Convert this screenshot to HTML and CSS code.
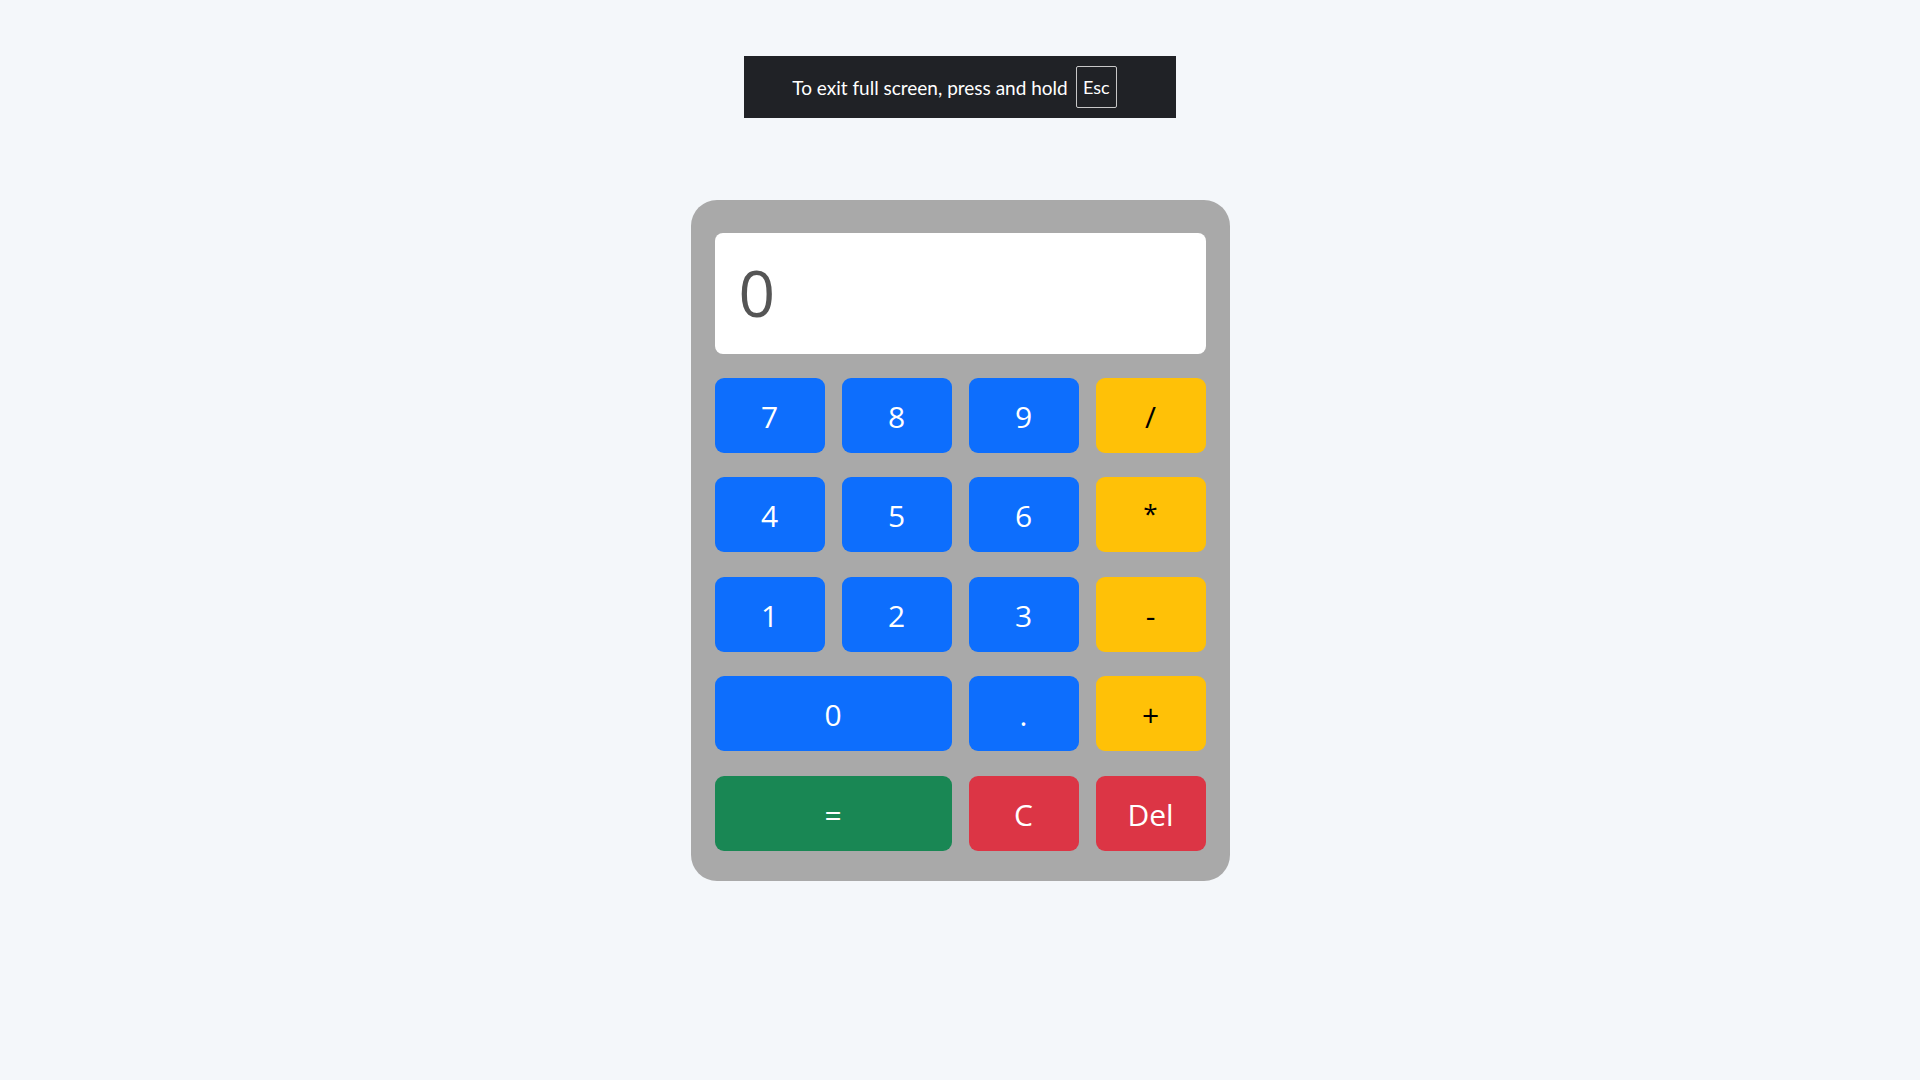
FILE: index.html
```html
<!DOCTYPE html>
<html lang="en">
<head>
<meta charset="utf-8">
<title>Calculator</title>
<link rel="stylesheet" href="styles.css">
</head>
<body>
  <div class="fs-toast">
    <span class="fs-text">To exit full screen, press and hold</span>
    <span class="fs-key">Esc</span>
  </div>
  <main class="calculator">
    <div class="display">0</div>
    <div class="keys">
      <button class="key num">7</button>
      <button class="key num">8</button>
      <button class="key num">9</button>
      <button class="key op">/</button>
      <button class="key num">4</button>
      <button class="key num">5</button>
      <button class="key num">6</button>
      <button class="key op star">*</button>
      <button class="key num">1</button>
      <button class="key num">2</button>
      <button class="key num">3</button>
      <button class="key op">-</button>
      <button class="key num wide">0</button>
      <button class="key num">.</button>
      <button class="key op">+</button>
      <button class="key eq wide">=</button>
      <button class="key danger">C</button>
      <button class="key danger">Del</button>
    </div>
  </main>
</body>
</html>
```
FILE: styles.css
```css
* { box-sizing: border-box; }
html, body { margin: 0; padding: 0; }
body {
  background: #f4f7fa;
  font-family: "Open Sans", "Noto Sans", sans-serif;
  height: 1080px;
  display: flex;
  align-items: center;
  justify-content: center;
}
.fs-toast {
  position: absolute;
  top: 56px;
  left: 50%;
  transform: translateX(-50%);
  width: 432px;
  height: 62px;
  background: #202226;
  color: #fff;
  display: flex;
  align-items: center;
  justify-content: center;
  gap: 8px;
  padding-right: 11px;
  font-family: "Lato", "Open Sans", sans-serif;
  font-size: 19px;
}
.fs-key {
  display: flex;
  align-items: center;
  justify-content: center;
  width: 41px;
  height: 42px;
  border: 1px solid #c8c8c8;
  border-radius: 2px;
  font-size: 18px;
}
.calculator {
  width: 539px;
  height: 681px;
  background: #a9a9a9;
  border-radius: 26px;
  padding: 33px 24px 30px 24px;
}
.display {
  height: 121px;
  background: #fff;
  border-radius: 8px;
  margin-bottom: 24px;
  padding: 0 24px;
  display: flex;
  align-items: center;
  font-size: 64px;
  color: #555;
  line-height: 1;
}
.keys {
  display: grid;
  grid-template-columns: repeat(4, 1fr);
  grid-auto-rows: 75px;
  column-gap: 17px;
  row-gap: 24.5px;
}
.key {
  border: none;
  border-radius: 9px;
  font-family: inherit;
  font-size: 30px;
  padding: 0;
  display: flex;
  align-items: center;
  justify-content: center;
  color: #fff;
  padding-top: 2px;
}
.key.star { font-size: 26px; padding-bottom: 6px; }
.key.wide { grid-column: span 2; }
.num { background: #0d6efd; }
.op { background: #ffc107; color: #000; }
.eq { background: #198754; }
.danger { background: #dc3545; }
```
